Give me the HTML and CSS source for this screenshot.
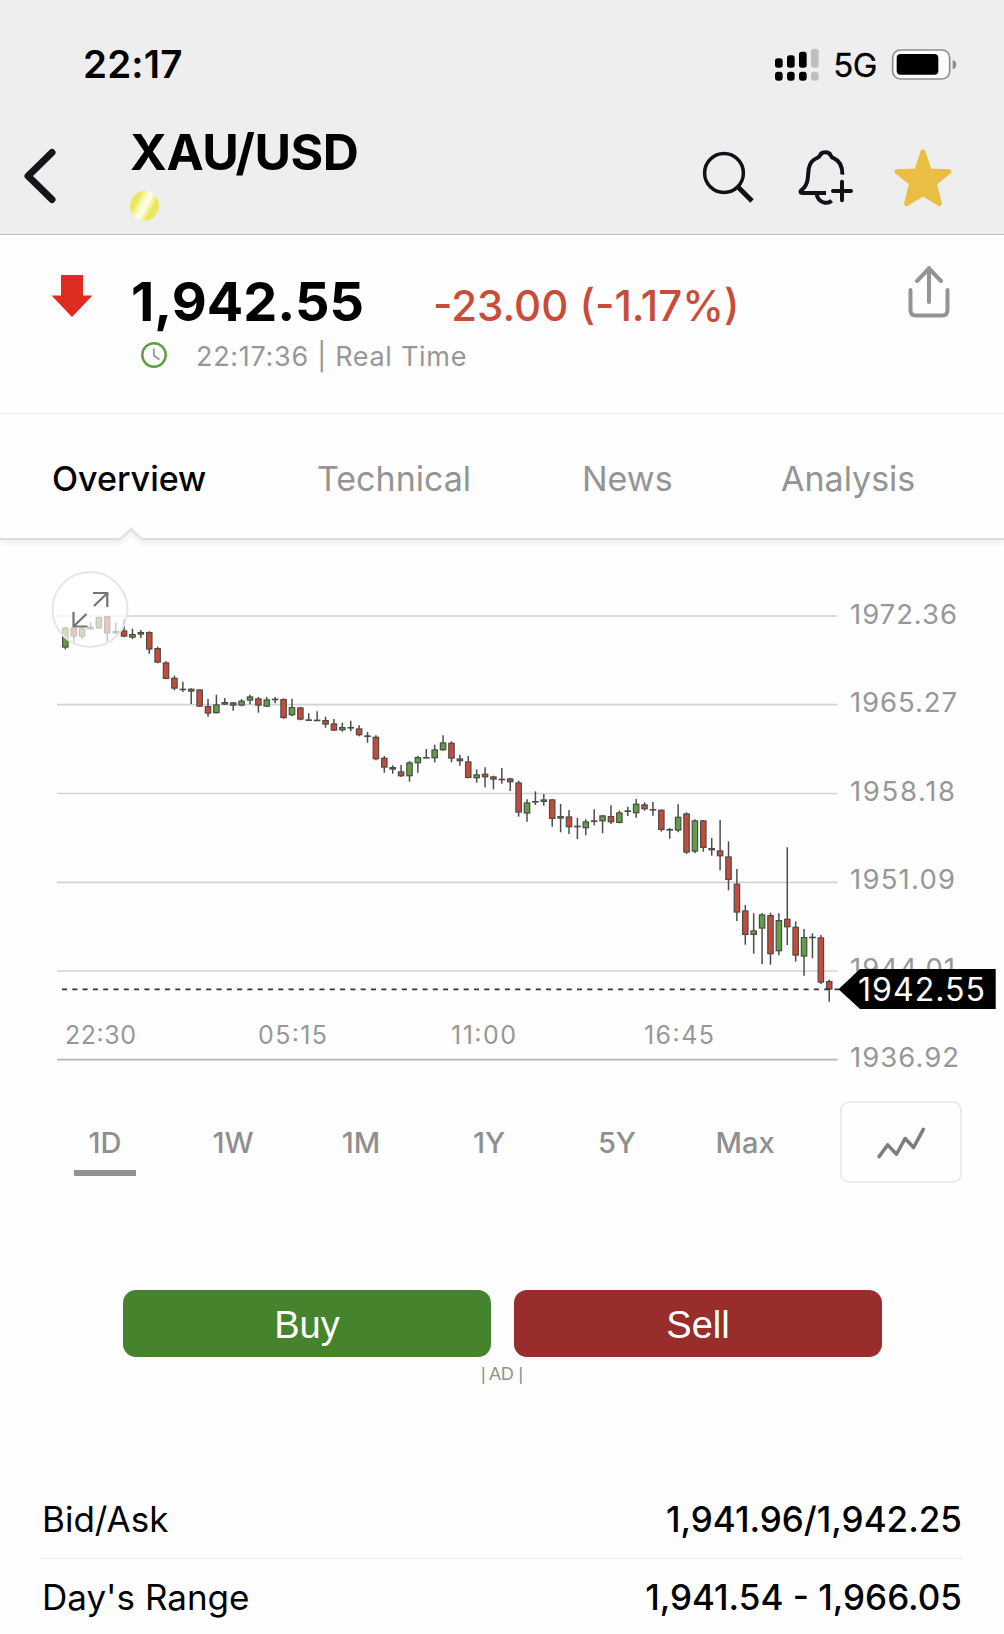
FILE: index.html
```html
<!DOCTYPE html>
<html lang="en">
<head>
<meta charset="utf-8">
<title>XAU/USD</title>
<link rel="stylesheet" href="styles.css">
</head>
<body>
<header class="header">
  <div class="status">
    <span class="clock">22:17</span>
    <div class="status-icons">
      <svg class="signal" viewBox="352 82 138 99">
        <g fill="#000">
          <rect x="355" y="113" width="23" height="28" rx="8"/><rect x="391" y="104" width="23" height="37" rx="8"/><rect x="427" y="93" width="23" height="48" rx="8"/>
          <rect x="355" y="153" width="23" height="27" rx="9"/><rect x="391" y="153" width="23" height="27" rx="9"/><rect x="427" y="153" width="23" height="27" rx="9"/>
        </g>
        <g fill="#bfbfbf"><rect x="463" y="84" width="23" height="57" rx="8"/><rect x="463" y="153" width="23" height="27" rx="9"/></g>
      </svg>
      <span class="network">5G</span>
      <svg class="battery" viewBox="695 81 198 99">
        <rect x="700" y="87" width="171" height="87" rx="23" fill="#fcfcfc" stroke="#8e8e8e" stroke-width="5"/>
        <rect x="712" y="99" width="125" height="62" rx="12"/>
        <path d="M880 117q11 4 11 14t-11 14z" fill="#8e8e8e"/>
      </svg>
    </div>
  </div>
  <div class="titlebar">
    <svg class="back" viewBox="0 0 40 60"><path d="M30 6.500 6 30l24 23.500" fill="none" stroke="#15151b" stroke-width="7" stroke-linecap="round" stroke-linejoin="round"/></svg>
    <div class="title">
      <h1>XAU/USD</h1>
      <span class="gold"></span>
    </div>
    <div class="actions">
      <svg class="search" viewBox="0 0 54 54" fill="none" stroke="#111118"><circle cx="22" cy="22" r="19.400" stroke-width="3.500"/><path d="M35.500 35.500 50 50" stroke-width="5"/></svg>
      <svg class="bell" viewBox="410 380 180 180" fill="none" stroke="#111118" stroke-width="12" stroke-linejoin="round">
        <path d="M500 518H430Q419 518 425 511Q442 498 445 477L448 446Q452 421 473 413Q480 411 482 405Q486 396 498 396Q510 396 514 405Q516 411 524 414Q550 425 549 463"/>
        <path d="M472 522Q476 543 496 547Q508 549 517 541"/>
        <path d="M548 484V540M521 512H575" stroke-linecap="round"/>
      </svg>
      <svg class="star" viewBox="700 380 186 186"><path d="M793 395 812 452 871 454 827 489 842 550 793 520 744 550 759 489 715 454 774 452Z" fill="#e9be42" stroke="#e9be42" stroke-width="15" stroke-linejoin="round"/></svg>
    </div>
  </div>
</header>

<section class="quote">
  <svg class="down" viewBox="0 0 42 42"><path d="M10 0H32V20.500H41.500L21 42 .500 20.500H10Z" fill="#df2c20"/></svg>
  <div class="quote-body">
    <div class="price-line"><span class="price">1,942.55</span><span class="change">-23.00 (-1.17%)</span></div>
    <div class="time-line">
      <svg class="time-icon" viewBox="0 0 28 28" fill="none"><circle cx="14" cy="14" r="11.700" stroke="#5fa043" stroke-width="2.500"/><path d="M13.800 7.500V14.500L19.500 18.500" stroke="#8d9a8b" stroke-width="1.700"/></svg>
      <span class="time">22:17:36 | Real Time</span>
    </div>
  </div>
  <svg class="share" viewBox="0 0 44 56" fill="none" stroke="#949494" stroke-width="4" stroke-linecap="round" stroke-linejoin="round"><path d="M22 38V4M10 17 22 4.500 34 17M3.500 26V46Q3.500 51.500 9 51.500H35Q40.500 51.500 40.500 46V26"/></svg>
</section>

<nav class="tabs">
  <a class="tab active">Overview</a>
  <a class="tab technical">Technical</a>
  <a class="tab news">News</a>
  <a class="tab analysis">Analysis</a>
  <svg class="notch" viewBox="0 0 30 22"><path d="M3 13 15 1 27 13V22H3Z" fill="#fff"/><path d="M3 12.500 15 1 27 12.500 27 16 15 6 3 16Z" fill="#e4e4e4"/><path d="M3 16 15 6 27 16V20L15 11 3 20Z" fill="#f5f5f5"/></svg>
</nav>

<section class="chart">
  <svg id="chart" viewBox="0 560 1004 525">
    <g class="grid"><path d="M57 616H837.500M57 704.700H837.500M57 793.500H837.500M57 882.300H837.500M57 971H837.500"/><path class="base" d="M57 1059.700H837.500"/></g>
    <g id="candles"></g>
    <g class="axis-y">
      <text x="850" y="623.500" textLength="107">1972.36</text>
      <text x="850" y="712" textLength="107">1965.27</text>
      <text x="850" y="801" textLength="105">1958.18</text>
      <text x="850" y="889.300" textLength="105">1951.09</text>
      <text x="850" y="978" textLength="105">1944.01</text>
      <text x="850" y="1067" textLength="109">1936.92</text>
    </g>
    <g class="axis-x">
      <text x="65" y="1043.500" textLength="71">22:30</text>
      <text x="258" y="1043.500" textLength="69">05:15</text>
      <text x="451" y="1043.500" textLength="65">11:00</text>
      <text x="644" y="1043.500" textLength="70">16:45</text>
    </g>
    <path class="last" d="M62 989.300H840"/>
    <path d="M838.500 989.200 860 969H995.700V1009H860Z"/>
    <text class="tag" x="858" y="1001" textLength="127">1942.55</text>
    <g class="expand">
      <circle cx="90" cy="609.500" r="37.500"/>
      <path d="M93 593H107.300V607M107 593.500 94 606M73.500 612V626.500H87.500M73.500 626.500 86.500 614"/>
    </g>
  </svg>
</section>

<section class="ranges">
  <div class="range-list">
    <a class="range selected">1D</a><a class="range">1W</a><a class="range">1M</a><a class="range">1Y</a><a class="range">5Y</a><a class="range">Max</a>
  </div>
  <div class="chart-type"><svg viewBox="1120 190 155 110"><path d="M1132 287 1158 252 1184 280 1210 233 1235 260 1264 206" fill="none" stroke="#7d7d7d" stroke-width="10.500" stroke-linecap="round" stroke-linejoin="round"/></svg></div>
</section>

<section class="trade">
  <div class="buttons"><a class="btn buy">Buy</a><a class="btn sell">Sell</a></div>
  <div class="ad">| AD |</div>
</section>

<section class="stats">
  <div class="row"><span>Bid/Ask</span><span class="value bid">1,941.96/1,942.25</span></div>
  <div class="row"><span class="days">Day's Range</span><span class="value dr">1,941.54 - 1,966.05</span></div>
</section>
<script src="chart.js"></script>
</body>
</html>
```
FILE: styles.css
```css
* { box-sizing: border-box; }
body {
  margin: 0;
  width: 1004px;
  height: 1634px;
  overflow: hidden;
  background: #fefefe;
  color: #000;
  font-family: Inter, "Liberation Sans", sans-serif;
}
svg { display: block; flex: none; }
span, a { white-space: nowrap; }

.header { height: 235px; background: #eee; border-bottom: 1.500px solid #bbb; }
.status { height: 128px; padding: 0 47px 0 83px; display: flex; align-items: center; justify-content: space-between; }
.clock { font-size: 38.500px; font-weight: 600; letter-spacing: 0.200px; }
.status-icons { display: flex; align-items: center; }
.signal { width: 46px; height: 33px; }
.network { font-size: 33px; margin: 2px 14px 0 13px; letter-spacing: -0.500px; -webkit-text-stroke: 0.300px #000; }
.battery { width: 66px; height: 33px; }
.titlebar { display: flex; height: 106px; padding-left: 22px; }
.back { width: 40px; height: 60px; margin-top: 18px; }
.title { margin-left: 68px; width: 560px; }
h1 { margin: -4px 0 0; font-size: 50px; line-height: 56px; font-weight: 700; letter-spacing: -0.500px; }
.gold { display: block; width: 29px; height: 30px; margin-top: 11px; border-radius: 50%; background: linear-gradient(118deg, #ededa0 5%, #e9e64e 24%, #fbfad0 43%, #fffff0 52%, #e9e64e 72%, #ededa0 97%); }
.actions { display: flex; }
.search { width: 54px; height: 54px; margin: 23px 0 0 12px; }
.bell { width: 60px; height: 60px; margin: 19px 0 0 40px; }
.star { width: 62px; height: 62px; margin: 19px 0 0 36px; }

.quote { height: 179px; display: flex; border-bottom: 1.500px solid #ededed; padding-left: 51px; }
.down { width: 42px; height: 42px; margin-top: 40px; }
.quote-body { margin-left: 38px; width: 776px; }
.price-line { display: flex; margin-top: 37px; line-height: 60px; }
.price { width: 302px; font-size: 54px; font-weight: 700; }
.change { font-size: 42px; font-weight: 500; color: #c84d39; line-height: 68px; }
.time-line { display: flex; align-items: center; height: 36px; margin: -2px 0 0 9px; }
.time-icon { width: 28px; height: 28px; margin-top: -3px; }
.time { margin-left: 28px; font-size: 27px; color: #979797; letter-spacing: 0.700px; }
.share { width: 44px; height: 56px; margin-top: 29px; }

.tabs { position: relative; display: flex; height: 126px; padding-left: 52px; line-height: 130px; font-size: 34px; color: #949494; border-bottom: 2px solid #dedede; box-shadow: 0 3px 6px rgba(0,0,0,.07); }
.tab { display: block; }
.active { width: 265px; color: #000; font-weight: 500; }
.technical { width: 265px; }
.news { width: 199px; }
.notch { position: absolute; left: 116px; bottom: -10px; width: 30px; height: 22px; }

.chart { height: 525px; margin-top: 20px; }
#chart { width: 1004px; height: 525px; }
.grid { stroke: #d3d3d3; stroke-width: 1.700; }
.base { stroke: #b5b5b5; }
.axis-y { font-size: 27.500px; fill: #979797; }
.axis-x { font-size: 25px; fill: #979797; }
.tag { font-size: 32px; fill: #fff; }
.last { stroke: #333; stroke-width: 1.700; stroke-dasharray: 5 5.300; }
.wick { stroke: #4c4c50; stroke-width: 1.500; }
.body { stroke: #4c4c46; stroke-width: 1.200; }
.up { fill: #5f9f45; }
.fall { fill: #c84a3a; }
.flat { fill: #6b6b70; }
.expand circle { fill: #fff; fill-opacity: .68; stroke: #e6e6e6; stroke-width: 2; }
.expand path { fill: none; stroke: #747474; stroke-width: 2.200; }

.ranges { display: flex; height: 82px; margin-top: 16px; }
.range-list { display: flex; width: 799px; margin-left: 41px; }
.range { position: relative; width: 128px; height: 82px; text-align: center; font-size: 29px; font-weight: 500; line-height: 83px; color: #8f8f8f; }
.selected::after { content: ""; position: absolute; left: 33px; top: 69px; width: 62px; height: 5.500px; background: #929292; }
.chart-type { width: 122px; height: 82px; border: 2px solid #ebebeb; border-radius: 9px; display: flex; align-items: center; justify-content: center; }
.chart-type svg { width: 52px; height: 37px; }

.trade { margin-top: 107px; height: 191px; }
.buttons { display: flex; justify-content: center; gap: 23px; margin-left: 1px; }
.btn { width: 368px; height: 67px; border-radius: 13px; color: #fff; font: 38px/70px "Liberation Sans", Arial, sans-serif; text-align: center; }
.buy { background: #45842d; }
.sell { background: #982d2b; }
.ad { text-align: center; font: 17.500px/35px "Liberation Sans", Arial, sans-serif; color: #8f8f8f; }

.stats { margin: 0 41px; font-size: 35px; }
.row { display: flex; justify-content: space-between; height: 78px; line-height: 77px; padding: 0 1px; border-bottom: 1.500px solid #eee; }
.value { font-weight: 500; }
```
FILE: chart.js
```javascript
// Candles are [type, high, body top, body bottom, low], in thirds of a point,
// each block measured from its own base line. Types: u = up, d = down, f = flat.
const blocks = [
  [1680, [
    "u 200 203 263 268", "d 203 203 230 245", "u 203 205 230 238", "f 187 200 208 210", "u 170 171 205 207",
    "d 168 168 221 243", "f 187 213 220 222", "d 178 211 230 232", "u 206 222 233 237", "u 210 216 224 234",
    "d 214 216 269 281", "d 260 264 308 310", "d 304 307 357 358", "d 347 353 386 391", "f 365 386 390 396",
    "d 385 386 395 432", "d 388 388 440 441", "d 417 438 461 470", "u 404 433 460 460", "u 414 426 434 435",
    "d 426 427 437 452", "u 417 422 437 439", "u 404 409 422 433", "d 411 415 437 458", "u 411 418 440 441",
    "f 411 416 420 430", "d 415 417 474 477"]],
  [1980, [
    "u 116 141 166 169", "d 141 142 179 181", "f 160 178 182 182", "f 154 179 183 183", "d 170 180 194 203",
    "d 177 190 212 213", "u 188 201 211 215", "f 182 201 205 214", "d 196 205 226 229", "u 216 226 231 248",
    "d 226 230 298 301", "d 288 293 323 338", "d 316 321 329 341", "d 315 334 349 351", "u 303 307 349 365",
    "u 287 291 310 338", "f 267 291 295 295", "u 254 268 295 307", "u 226 247 271 272", "d 244 248 296 307",
    "d 284 295 304 317", "d 288 304 354 355", "u 328 343 355 368", "d 322 341 352 382", "d 347 349 359 388",
    "f 324 356 361 371", "d 353 355 367 393", "d 362 367 458 470", "u 418 427 461 485", "f 394 423 427 435"]],
  [2220, [
    "u 162 178 186 197", "d 177 178 237 260", "u 192 228 236 277", "d 210 229 262 282", "f 234 257 261 297",
    "u 238 244 265 286", "f 208 241 245 256", "u 225 226 244 280", "d 196 228 247 252", "u 212 217 249 250",
    "f 200 211 215 228", "u 177 191 220 233", "d 187 193 208 212", "f 186 207 211 227", "d 208 209 270 275",
    "d 264 267 272 296", "u 193 230 272 277", "d 217 220 338 342", "u 238 241 335 340", "d 240 241 324 335",
    "u 294 324 331 347", "d 240 331 349 391", "d 304 349 420 451"]],
  [2400, [
    "d 207 251 338 363", "d 315 331 405 434", "u 340 391 405 461", "u 339 343 386 493", "d 338 345 463 494",
    "u 340 360 454 466", "d 142 356 382 435", "d 364 380 467 485", "u 387 411 470 527", "f 400 410 414 475",
    "d 405 412 548 552", "d 539 543 569 605"]]
];
const classes = { u: "up", d: "fall", f: "flat" };
let i = 0, out = "";
for (const [base, rows] of blocks) {
  for (const row of rows) {
    const [type, ...v] = row.split(" ");
    const [hi, top, bottom, lo] = v.map(n => (base + Number(n)) / 3);
    const x = 65.3 + 8.395 * i++;
    const h = Math.max(bottom - top - 1.2, 0.4);
    out += `<path class="wick" d="M${x} ${hi}V${lo}"/>` +
      `<rect class="body ${classes[type]}" x="${x - 2.7}" y="${top + 0.6}" width="5.4" height="${h}"/>`;
  }
}
document.getElementById("candles").innerHTML = out;
```
